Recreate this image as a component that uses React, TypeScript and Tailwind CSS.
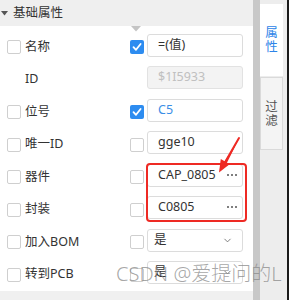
import { ChevronDown } from 'lucide-react';

type Row = {
  label: string;
  left?: boolean;
  right?: 'on' | 'off' | 'none';
  kind: 'input' | 'disabled' | 'pick' | 'select';
  value: string;
  blue?: boolean;
};

const rows: Row[] = [
  { label: '名称', left: true, right: 'on', kind: 'input', value: '=(值)' },
  { label: 'ID', left: false, right: 'none', kind: 'disabled', value: '$1I5933' },
  { label: '位号', left: true, right: 'on', kind: 'input', value: 'C5', blue: true },
  { label: '唯一ID', left: true, right: 'off', kind: 'input', value: 'gge10' },
  { label: '器件', left: true, right: 'off', kind: 'pick', value: 'CAP_0805' },
  { label: '封装', left: true, right: 'off', kind: 'pick', value: 'C0805' },
  { label: '加入BOM', left: true, right: 'off', kind: 'select', value: '是' },
  { label: '转到PCB', left: true, right: 'off', kind: 'select', value: '是' },
];

function Check({ on }: { on: boolean }) {
  if (on) {
    return (
      <span className="w-[14px] h-[14px] rounded-[2px] bg-[#2d8cf0] flex items-center justify-center shrink-0">
        <svg width="10" height="10" viewBox="0 0 10 10">
          <path d="M1.5 5.2 L4 7.8 L8.6 2" fill="none" stroke="white" strokeWidth="1.8" strokeLinecap="round" strokeLinejoin="round" />
        </svg>
      </span>
    );
  }
  return <span className="w-[14px] h-[14px] rounded-[2px] border border-[#cfcfcf] bg-white shrink-0" />;
}

function Field({ row }: { row: Row }) {
  if (row.kind === 'disabled') {
    return (
      <div className="w-[96px] h-[23px] mb-[4px] rounded-[3px] border border-[#e2e2e2] bg-[#f3f3f3] flex items-center px-[10px] text-[#c0c0c0]">
        {row.value}
      </div>
    );
  }
  if (row.kind === 'select') {
    return (
      <div className="w-[96px] h-[23px] mb-[4px] rounded-[3px] border border-[#dcdcdc] bg-white flex items-center justify-between pl-[6px] pr-[9px] text-[#333]">
        <span>{row.value}</span>
        <ChevronDown size={11} strokeWidth={1.8} className="text-[#666]" />
      </div>
    );
  }
  return (
    <div className="w-[96px] h-[23px] mb-[4px] rounded-[3px] border border-[#dcdcdc] bg-white flex items-center justify-between pl-[10px] pr-[5px]">
      <span className={row.blue ? 'text-[#3a8ee6]' : 'text-[#333]'}>{row.value}</span>
      {row.kind === 'pick' && (
        <span className="flex gap-[2px] items-center pb-[1px]">
          <span className="w-[2px] h-[2px] rounded-full bg-[#555]" />
          <span className="w-[2px] h-[2px] rounded-full bg-[#555]" />
          <span className="w-[2px] h-[2px] rounded-full bg-[#555]" />
        </span>
      )}
    </div>
  );
}

export default function App() {
  return (
    <div
      className="relative w-[289px] h-[300px] flex bg-white overflow-hidden text-[12.5px]"
      style={{ fontFamily: '"Noto Sans", "Noto Sans CJK SC", sans-serif' }}
    >
      {/* properties panel */}
      <div className="relative w-[253px] h-full flex flex-col">
        <div className="h-[26px] bg-[#efefef] flex items-center pl-[1px] gap-[5px] text-[#333] shrink-0">
          <svg width="7" height="5" viewBox="0 0 7 5">
            <path d="M0 0 H7 L3.5 4.5 Z" fill="#555" />
          </svg>
          <span>基础属性</span>
        </div>
        <svg className="absolute left-[131px] top-[26px]" width="10" height="6" viewBox="0 0 10 6">
          <path d="M0 0 H10 L5 5.5 Z" fill="#c4c4c4" />
        </svg>

        <div className="flex-1 flex flex-col pt-[5px]">
          {rows.map((row) => (
            <div key={row.label} className="h-[32.5px] flex items-center shrink-0">
              <div className="w-[7px]" />
              {row.left ? <Check on={false} /> : <span className="w-[14px]" />}
              <span className="w-[109px] pl-[4px] text-[#333]">{row.label}</span>
              {row.right === 'none' ? <span className="w-[14px]" /> : <Check on={row.right === 'on'} />}
              <div className="w-[3px]" />
              <Field row={row} />
            </div>
          ))}
        </div>
        <div className="h-[10px] bg-[#f0f0f0] shrink-0" />
      </div>

      {/* scroll bar */}
      <div className="w-[7px] h-full bg-[#c8c8c8]" />

      {/* side tabs */}
      <div className="w-[27px] h-full bg-[#ededed] pt-[4px] flex flex-col">
        <div className="w-[23px] h-[72px] bg-white flex flex-col items-center justify-center text-[#2d84e8] text-[12.5px] leading-[14px]">
          <span>属</span>
          <span>性</span>
        </div>
        <div className="w-[23px] h-[73px] mt-[1px] bg-[#f4f4f4] border border-[#dadada] flex flex-col items-center justify-center text-[#555] text-[12.5px] leading-[14px]">
          <span>过</span>
          <span>滤</span>
        </div>
      </div>
      <div className="w-[2px] h-full bg-[#1a1a1a]" />

      {/* annotation */}
      <div className="absolute left-[146px] top-[163px] w-[101px] h-[59px] border-2 border-[#ee2a24] rounded-[4px]" />
      <svg className="absolute left-0 top-0" width="289" height="300" viewBox="0 0 289 300">
        <path d="M239.5 137.5 L226.6 163.6 L224.2 162.2 Z" fill="#ee2a24" />
        <line x1="239" y1="138" x2="224" y2="164" stroke="#ee2a24" strokeWidth="2" strokeLinecap="round" />
        <path d="M219 172.5 L229.6 164.2 L220.8 159 Z" fill="#ee2a24" />
      </svg>

      {/* watermark */}
      <div className="absolute left-[116px] top-[261px] text-[20px] leading-[26px] text-[#8a8a8a]/75 font-light whitespace-nowrap">
        CSDN @爱提问的L
      </div>
    </div>
  );
}
